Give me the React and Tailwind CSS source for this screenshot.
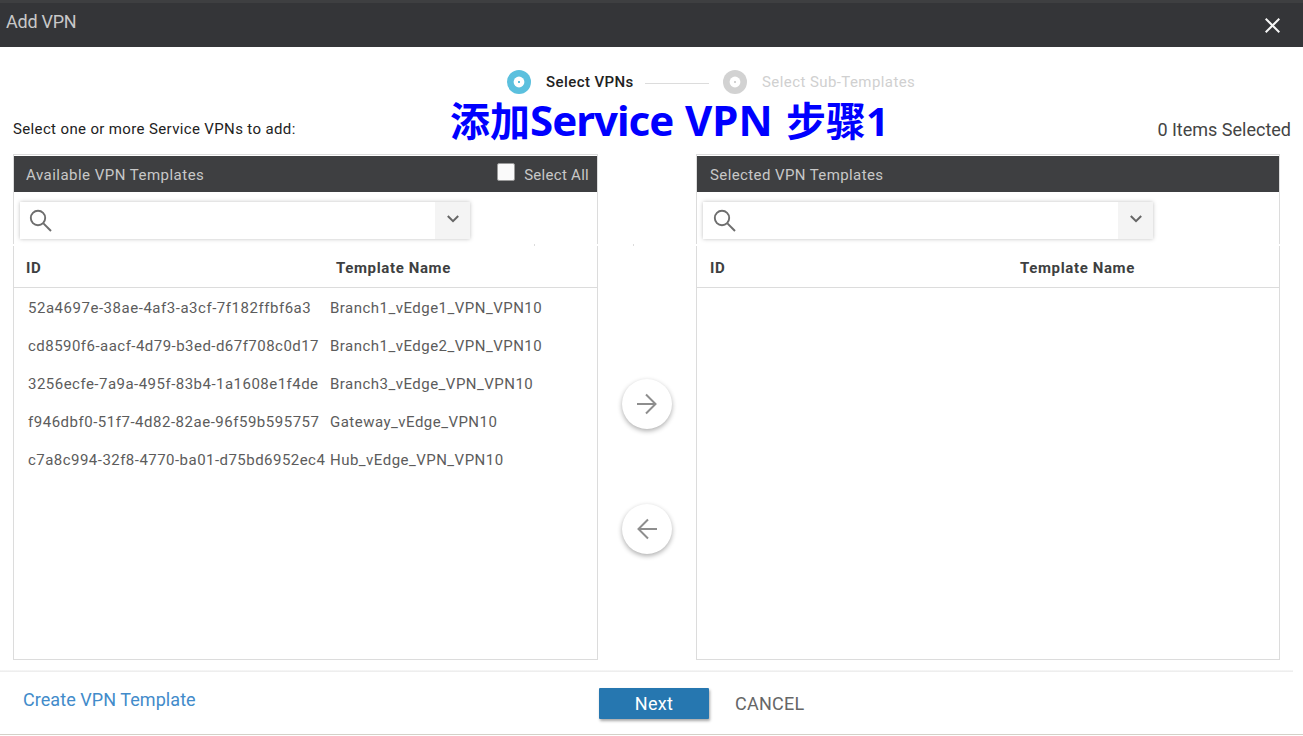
import React from "react";

const templates = [
  { id: "52a4697e-38ae-4af3-a3cf-7f182ffbf6a3", name: "Branch1_vEdge1_VPN_VPN10", idSpacing: "tracking-[0.53px]" },
  { id: "cd8590f6-aacf-4d79-b3ed-d67f708c0d17", name: "Branch1_vEdge2_VPN_VPN10", idSpacing: "tracking-[0.47px]" },
  { id: "3256ecfe-7a9a-495f-83b4-1a1608e1f4de", name: "Branch3_vEdge_VPN_VPN10", idSpacing: "tracking-[0.48px]" },
  { id: "f946dbf0-51f7-4d82-82ae-96f59b595757", name: "Gateway_vEdge_VPN10", idSpacing: "tracking-[0.52px]" },
  { id: "c7a8c994-32f8-4770-ba01-d75bd6952ec4", name: "Hub_vEdge_VPN_VPN10", idSpacing: "tracking-[0.47px]" },
];

function StepDot({ className }) {
  return (
    <svg className={className} width="24" height="24" viewBox="0 0 24 24">
      <circle cx="12" cy="12" r="12" fill="currentColor" />
      <circle cx="12" cy="12" r="5.4" fill="#fff" />
      <rect x="11" y="11" width="2" height="2" fill="currentColor" />
    </svg>
  );
}

function SearchBox({ iconInset }) {
  return (
    <div className="mt-[10px] ml-1.5 flex h-[37px] w-[450px] shrink-0 bg-white shadow-[0_0_4px_rgba(0,0,0,0.25)]">
      <svg className={`mt-[7px] ${iconInset} text-[#6e6e6e]`} width="24" height="24" viewBox="0 0 24 24" fill="none" stroke="currentColor">
        <circle cx="9" cy="9" r="7.2" strokeWidth="1.9" />
        <path d="M14.4 14.4 22 22" strokeWidth="2" />
      </svg>
      <div className="flex-1" />
      <div className="flex w-[35px] justify-center bg-[#f4f4f4]">
        <svg className="mt-[13px]" width="12" height="8" viewBox="0 0 12 8" fill="none" stroke="#666" strokeWidth="2">
          <path d="M0.8 1 6 6.2 11.2 1" />
        </svg>
      </div>
    </div>
  );
}

function Panel({ width, inset, title, titleSpacing, iconInset, selectAll, rows }) {
  return (
    <section className={`${width} flex h-[506px] flex-col border border-[#dcdcdc] pt-px`}>
      <header className={`${inset} flex h-9 shrink-0 items-center bg-[#3e3f41] pt-0.5 pr-2 text-[15px] text-[#c8c8c8]`}>
        <span className={`flex-1 ${titleSpacing}`}>{title}</span>
        {selectAll && (
          <label className="flex items-center tracking-[0.28px]">
            <span className="-mt-[6px] mr-[9px] h-[18px] w-[18px] rounded-[2px] border border-[#9a9a9a] bg-[#fafafa]" />
            Select All
          </label>
        )}
      </header>
      <SearchBox iconInset={iconInset} />
      <div className="relative mt-[5px] h-0.5 shrink-0">
        <div className="absolute -inset-x-px inset-y-0 bg-white" />
        {selectAll && <div className="absolute inset-y-0 right-[62px] w-px bg-[#dcdcdc]" />}
      </div>
      <div className={`${inset} flex h-[42px] shrink-0 items-center border-b border-[#dcdcdc] pt-[3px] text-[15px] font-bold tracking-[0.63px] text-[#3e3f41]`}>
        <span className="w-[310px]">ID</span>
        <span>Template Name</span>
      </div>
      <div className="pt-px text-[15px] text-[#5c5c5c]">
        {rows.map((row) => (
          <div key={row.id} className="flex h-[38px] items-center pl-3.5 whitespace-nowrap">
            <span className={`w-[302px] ${row.idSpacing}`}>{row.id}</span>
            <span className="tracking-[0.48px]">{row.name}</span>
          </div>
        ))}
      </div>
    </section>
  );
}

function MoveButton({ d }) {
  return (
    <button className="flex size-[50px] items-center justify-center rounded-full bg-white shadow-[0_2px_5px_rgba(0,0,0,0.32)]">
      <svg width="22" height="22" viewBox="0 0 22 22" fill="none" stroke="#8e8e8e" strokeWidth="2">
        <path d={d} />
      </svg>
    </button>
  );
}

export default function App() {
  return (
    <div className="relative flex h-[736px] w-[1303px] flex-col overflow-hidden bg-white font-['Roboto',sans-serif]">
      <header className="flex h-[47px] shrink-0 items-start justify-between border-t-3 border-[#3e3f41] bg-[#343538] pr-[23px] pl-1.5">
        <h1 className="mt-[5px] text-[18px] leading-7 tracking-[-0.25px] text-[#c8c8c8]">Add VPN</h1>
        <svg className="mt-[15px]" width="15" height="15" viewBox="0 0 15 15" stroke="#f5f5f5" strokeWidth="2">
          <path d="M0.7 0.7 14.3 14.3M14.3 0.7 0.7 14.3" />
        </svg>
      </header>

      <div className="mt-[23px] flex h-6 shrink-0 items-center pl-[507px] text-[15px]">
        <StepDot className="text-[#5bc0de]" />
        <span className="ml-[15px] w-[88px] font-medium tracking-[0.42px] whitespace-nowrap text-[#222]">Select VPNs</span>
        <span className="mt-[3px] ml-[11px] h-px w-[64px] bg-[#dcdcdc]" />
        <StepDot className="ml-[14px] text-[#d2d2d2]" />
        <span className="ml-[15px] tracking-[0.42px] text-[#d0d0d0]">Select Sub-Templates</span>
      </div>

      <div className="flex h-[60px] shrink-0 justify-between pr-3 pl-[13px]">
        <p className="mt-[25px] text-[15px] leading-5 tracking-[0.36px] text-[#222]">Select one or more Service VPNs to add:</p>
        <p className="mt-[26px] text-[18px] leading-5 text-[#444]">0 Items Selected</p>
      </div>

      <main className="flex shrink-0 pl-[13px]">
        <Panel width="w-[585px]" inset="pl-3" title="Available VPN Templates" titleSpacing="tracking-[0.48px]" iconInset="ml-[9px]" selectAll rows={templates} />
        <div className="relative flex w-[98px] flex-col items-center gap-[75px] pt-[225px]">
          <span className="absolute top-[90px] left-[35px] h-0.5 w-px bg-[#dcdcdc]" />
          <MoveButton d="M1 11H20M10 1.5 19.5 11 10 20.5" />
          <MoveButton d="M21 11H2M12 1.5 2.5 11 12 20.5" />
        </div>
        <Panel width="w-[584px]" inset="pl-[13px]" title="Selected VPN Templates" titleSpacing="tracking-[0.4px]" iconInset="ml-[10px]" rows={[]} />
      </main>

      <footer className="mt-[10px] flex h-[65px] shrink-0 flex-col">
        <div className="h-0.5 w-[1293px] bg-linear-to-b from-[#f8f8f8] to-[#ebebeb]" />
        <div className="flex flex-1 items-start border-b border-[#d4d1c8]">
          <a className="mt-[18px] w-[576px] pl-[23px] text-[18px] leading-5 tracking-[0.06px] text-[#428bca]">Create VPN Template</a>
          <button className="mt-4 ml-[23px] h-[31px] w-[110px] rounded-[1px] bg-[#2677b0] text-[18px] leading-[31px] tracking-[0.3px] text-white shadow-[1px_2px_3px_rgba(0,0,0,0.35)]">Next</button>
          <button className="mt-4 ml-[26px] h-[31px] text-[18px] leading-[31px] tracking-[0.25px] text-[#666]">CANCEL</button>
        </div>
      </footer>

      <div className="absolute top-[91px] left-[450px] flex items-baseline font-['Noto_Sans','Noto_Sans_CJK_SC',sans-serif] text-[40px] leading-[58px] font-bold whitespace-nowrap text-[#0000ff]">
        <span className="w-20">添加</span>
        <span className="w-[155px] text-[42px] tracking-[-1px]">Service</span>
        <span className="w-[101px] text-[42px]">VPN</span>
        <span>步骤1</span>
      </div>
    </div>
  );
}
